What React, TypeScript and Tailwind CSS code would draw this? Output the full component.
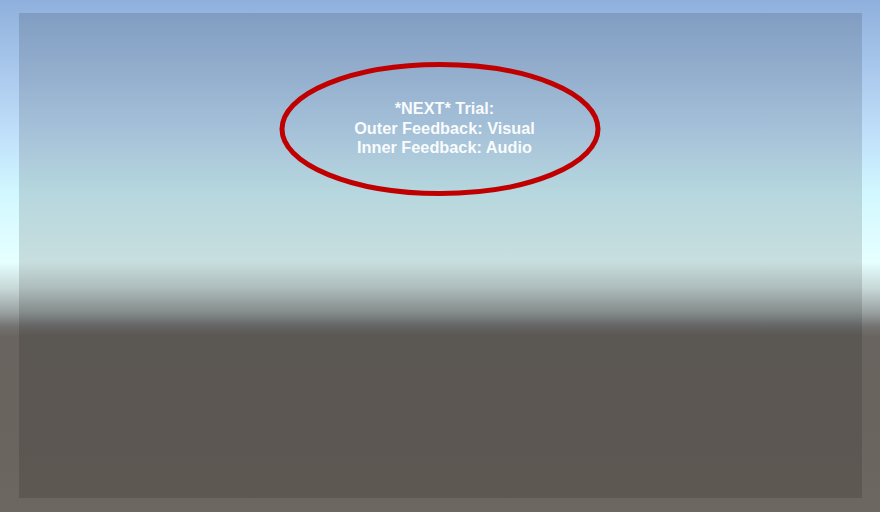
import React from 'react';

export default function App() {
  return (
    <div className="w-[880px] h-[512px] overflow-hidden bg-[linear-gradient(180deg,#8fb0dc_0px,#a9c8ec_70px,#c0e0fa_135px,#d2f8ff_195px,#e6ffff_262px,#c8d8d8_288px,#9aa2a2_312px,#747474_326px,#69645f_336px,#6a645f_420px,#6d6761_512px)] pt-[13px] pl-[19px] pr-[18px] pb-[14px] font-['Liberation_Sans',Arial,sans-serif]">
      <div className="h-full w-full bg-black/[0.13] flex flex-col items-center pt-[86px]">
        {/* trial banner with red ring */}
        <div className="relative">
          <div className="pl-[8px] text-center text-white/95 font-bold text-[16.3px] leading-[19.5px]">
            <div>*NEXT* Trial:</div>
            <div>Outer Feedback: Visual</div>
            <div>Inner Feedback: Audio</div>
          </div>
          <svg
            className="absolute left-1/2 top-[calc(50%+1px)] -translate-x-1/2 -translate-y-1/2 pointer-events-none"
            width="330"
            height="140"
            viewBox="0 0 330 140"
          >
            <ellipse cx="165" cy="70" rx="158" ry="64.5" fill="none" stroke="#c00000" strokeWidth="5" />
          </svg>
        </div>
      </div>
    </div>
  );
}
